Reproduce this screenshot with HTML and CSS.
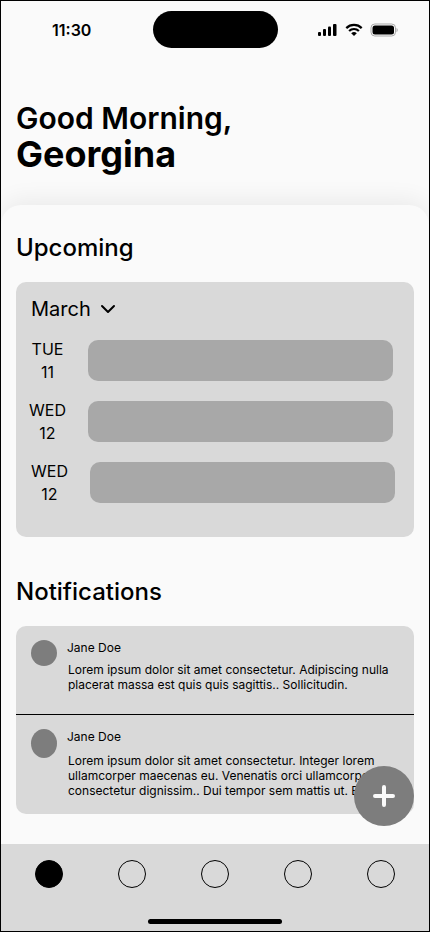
FILE: index.html
```html
<!DOCTYPE html>
<html lang="en">
<head>
<meta charset="utf-8">
<meta name="viewport" content="width=device-width, initial-scale=1">
<title>Home</title>
<link rel="stylesheet" href="styles.css">
</head>
<body>
<div class="app">
  <div class="status">
    <time class="status-time">11:30</time>
    <div class="island"></div>
    <div class="status-icons">
      <svg width="20" height="14" viewBox="0 0 20 14" aria-hidden="true">
        <rect x="0" y="9" width="3" height="4" rx="1"/>
        <rect x="5" y="6" width="3" height="7" rx="1"/>
        <rect x="10" y="3.500" width="3" height="9.500" rx="1"/>
        <rect x="15" y="1" width="3.500" height="12" rx="1"/>
      </svg>
      <svg width="18" height="14" viewBox="0 0 18 14" aria-hidden="true">
        <g fill="none" stroke="#000" stroke-width="2.200">
          <path d="M1.300 5.100a11 11 0 0 1 15.400 0"/>
          <path d="M4.100 8a7 7 0 0 1 9.800 0"/>
        </g>
        <path d="M9 13 6.200 10.300a4 4 0 0 1 5.600 0z"/>
      </svg>
      <svg width="29" height="14" viewBox="0 0 29 14" aria-hidden="true">
        <rect x="1" y="1" width="24.500" height="12" rx="3.800" fill="none" stroke="#a9a9a9"/>
        <rect x="2.500" y="2.500" width="21.500" height="9" rx="2.500"/>
        <path d="M26.500 5v4.200c1.700-.7 1.700-3.500 0-4.200z" fill="#a9a9a9"/>
      </svg>
    </div>
  </div>

  <header class="greeting">
    <h1>Good Morning, <strong>Georgina</strong></h1>
  </header>

  <main class="sheet">
    <section>
      <h2>Upcoming</h2>
      <div class="card calendar">
        <div class="month">
          <select aria-label="Month"><option>March</option></select>
          <svg width="16" height="10" viewBox="0 0 16 10" aria-hidden="true"><path d="M2 2l6 6 6-6" fill="none" stroke="#000" stroke-width="2" stroke-linecap="round" stroke-linejoin="round"/></svg>
        </div>
        <ul class="days">
          <li><span class="date">TUE<br>11</span><span class="event"></span></li>
          <li><span class="date">WED<br>12</span><span class="event"></span></li>
          <li class="shifted"><span class="date">WED<br>12</span><span class="event"></span></li>
        </ul>
      </div>
    </section>

    <section class="notifications">
      <h2>Notifications</h2>
      <div class="card">
        <article class="note">
          <span class="avatar"></span>
          <div class="note-body">
            <h3>Jane Doe</h3>
            <p>Lorem ipsum dolor sit amet consectetur. Adipiscing nulla placerat massa est quis quis sagittis.. Sollicitudin.</p>
          </div>
        </article>
        <article class="note note-long">
          <span class="avatar"></span>
          <div class="note-body">
            <h3>Jane Doe</h3>
            <p>Lorem ipsum dolor sit amet consectetur. Integer lorem ullamcorper maecenas eu. Venenatis orci ullamcorper consectetur dignissim.. Dui tempor sem mattis ut. Et.</p>
          </div>
        </article>
      </div>
    </section>
  </main>

  <div class="dock">
    <button class="add" type="button" aria-label="Add">
      <svg width="24" height="24" viewBox="0 0 24 24" aria-hidden="true"><path d="M12 3v18M3 12h18" stroke="#fafafa" stroke-width="4" stroke-linecap="round"/></svg>
    </button>
    <nav class="tabs">
      <a class="tab active" href="#home" aria-label="Home" aria-current="page"></a>
      <a class="tab" href="#calendar" aria-label="Calendar"></a>
      <a class="tab" href="#messages" aria-label="Messages"></a>
      <a class="tab" href="#activity" aria-label="Activity"></a>
      <a class="tab" href="#profile" aria-label="Profile"></a>
    </nav>
    <div class="home-bar"></div>
  </div>
</div>
</body>
</html>
```

FILE: styles.css
```css
* {
  box-sizing: border-box;
}

body,
h1,
h2,
h3,
p,
ul {
  margin: 0;
  padding: 0;
}

body {
  font-family: Inter, "Liberation Sans", sans-serif;
  color: #000;
  background: #fafafa;
}

.app {
  display: flex;
  flex-direction: column;
  min-height: 100vh;
  border: 1px solid #000;
  background: #fafafa;
  overflow: hidden;
}

.status {
  display: grid;
  grid-template-columns: 1fr 125px 1fr;
  align-items: center;
  padding-top: 10px;
}

.status-time {
  padding-left: 51px;
  font-size: 16px;
  line-height: 20px;
  font-weight: 600;
}

.island {
  height: 37px;
  border-radius: 19px;
  background: #000;
}

.status-icons {
  display: flex;
  justify-content: flex-end;
  gap: 7px;
  padding-right: 30px;
}

.greeting {
  padding: 52px 15px 33px;
}

h1 {
  font-size: 30px;
  line-height: 36px;
  font-weight: 600;
}

h1 strong {
  display: block;
  font-size: 36px;
  font-weight: 700;
}

.sheet {
  flex: 1;
  padding: 28px 15px 30px;
  border-radius: 20px 20px 0 0;
  background: #fafafa;
  box-shadow: 0 -4px 24px rgba(0, 0, 0, 0.07);
}

h2 {
  font-size: 24px;
  line-height: 29px;
  font-weight: 500;
}

.card {
  margin-top: 20px;
  border-radius: 10px;
  background: #d9d9d9;
  overflow: hidden;
}

.calendar {
  padding: 15px 21px 31px 13px;
}

.month {
  display: flex;
  align-items: center;
  gap: 9px;
  padding-left: 2px;
}

.month select {
  appearance: none;
  padding: 0;
  border: 0;
  background: none;
  color: inherit;
  font: inherit;
  font-size: 20px;
  line-height: 24px;
}

.days {
  display: grid;
  gap: 15px;
  margin-top: 17px;
  list-style: none;
}

.days li {
  display: flex;
  gap: 22px;
}

.days .shifted {
  margin: 0 -2px 0 2px;
}

.date {
  width: 37px;
  font-size: 16px;
  line-height: 23px;
  text-align: center;
}

.event {
  flex: 1;
  height: 41px;
  margin-top: 2px;
  border-radius: 10px;
  background: #a8a8a8;
}

.notifications {
  margin-top: 40px;
}

.note {
  display: flex;
  gap: 10px;
  min-height: 88px;
  padding: 14px 16px 16px 15px;
  font-size: 12px;
  line-height: 15px;
}

.note + .note {
  border-top: 1px solid #000;
}

.avatar {
  flex: none;
  width: 26px;
  height: 26px;
  border-radius: 50%;
  background: #7d7d7d;
}

.note-body {
  flex: 1;
}

.note h3 {
  font-size: 12px;
  font-weight: 400;
}

.note p {
  margin-top: 7px;
  padding-left: 1px;
}

.note-long .avatar {
  height: 29px;
}

.note-long p {
  margin-top: 9px;
}

.dock {
  position: relative;
  padding: 16px 34px 7px;
  background: #d9d9d9;
}

.add {
  position: absolute;
  right: 15px;
  bottom: calc(100% + 18px);
  display: grid;
  place-items: center;
  width: 60px;
  height: 60px;
  padding: 0;
  border: 0;
  border-radius: 50%;
  background: #7d7d7d;
}

.tabs {
  display: flex;
  justify-content: space-between;
}

.tab {
  width: 28px;
  height: 28px;
  border: 1px solid #000;
  border-radius: 50%;
}

.tab.active {
  background: #000;
}

.home-bar {
  width: 134px;
  height: 5px;
  margin: 31px auto 0;
  border-radius: 3px;
  background: #000;
}
```
